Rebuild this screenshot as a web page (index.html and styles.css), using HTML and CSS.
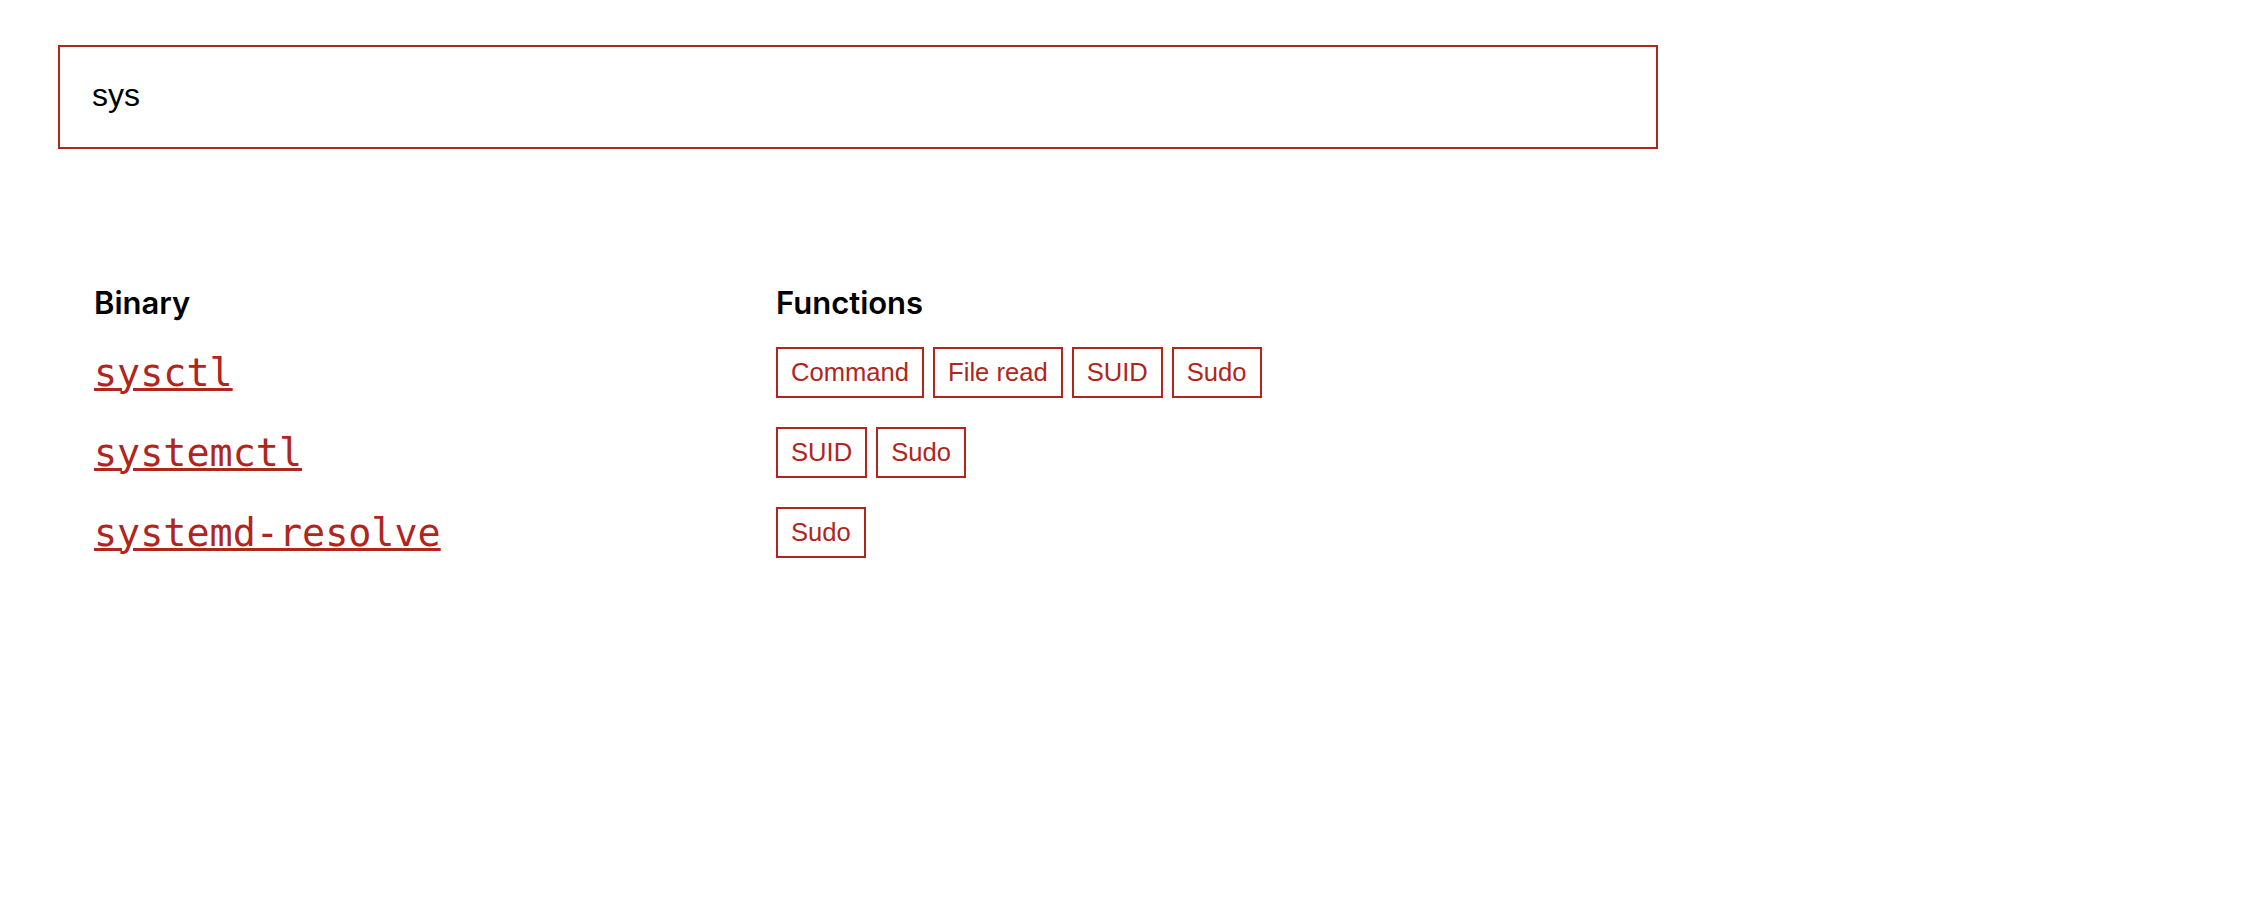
FILE: index.html
```html
<!DOCTYPE html>
<html lang="en">
<head>
<meta charset="utf-8">
<title>GTFOBins search</title>
<link rel="stylesheet" href="styles.css">
</head>
<body>
<main class="page">
  <div class="search">sys</div>
  <div class="results">
    <div class="head">Binary</div>
    <div class="head">Functions</div>

    <div class="bin"><a href="#">sysctl</a></div>
    <div class="tags"><span class="tag">Command</span><span class="tag">File read</span><span class="tag">SUID</span><span class="tag">Sudo</span></div>

    <div class="bin"><a href="#">systemctl</a></div>
    <div class="tags"><span class="tag">SUID</span><span class="tag">Sudo</span></div>

    <div class="bin"><a href="#">systemd-resolve</a></div>
    <div class="tags"><span class="tag">Sudo</span></div>
  </div>
</main>
</body>
</html>
```
FILE: styles.css
```css
html, body {
  margin: 0;
  padding: 0;
  background: #ffffff;
}

.page {
  padding: 45px 0 0 58px;
  font-family: "Liberation Sans", Arial, sans-serif;
  color: #000;
}

.search {
  box-sizing: border-box;
  width: 1600px;
  height: 104px;
  border: 2px solid #b0261c;
  padding: 0 32px 3px 32px;
  display: flex;
  align-items: center;
  font-size: 32px;
  color: #000;
}

.results {
  display: grid;
  grid-template-columns: 682px auto;
  row-gap: 29px;
  align-items: center;
  margin: 138px 0 0 36px;
}

.head {
  font-family: Inter, "Noto Sans", sans-serif;
  font-weight: 600;
  font-size: 31px;
  line-height: 36px;
  margin: -2px 0 -3px;
}

.bin a {
  font-family: "DejaVu Sans Mono", monospace;
  font-size: 38.4px;
  color: #b0261c;
  text-decoration: underline;
  text-decoration-thickness: 3px;
}

.tags {
  display: flex;
  gap: 9px;
}

.tag {
  box-sizing: border-box;
  height: 51px;
  line-height: 47px;
  padding: 0 13px;
  border: 2px solid #b0261c;
  color: #b0261c;
  font-size: 25.6px;
}
```
